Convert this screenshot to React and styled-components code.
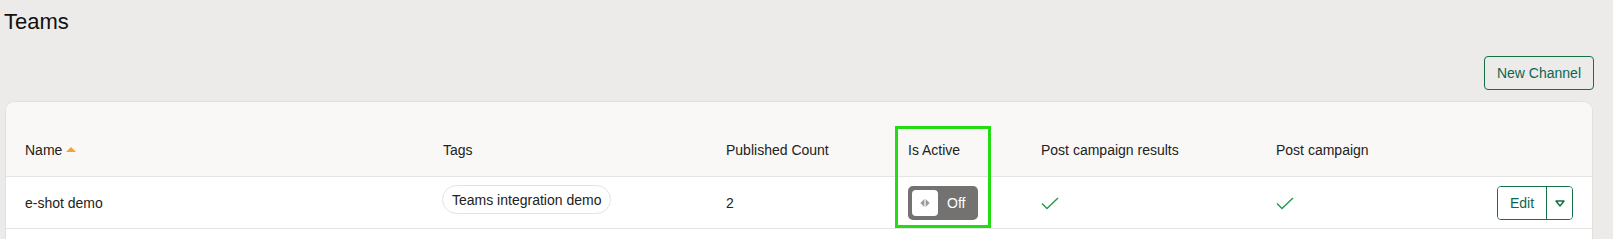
import React from 'react'
import styled, { createGlobalStyle } from 'styled-components'

const GlobalStyle = createGlobalStyle`
  html, body {
    margin: 0;
    padding: 0;
    background: #ecebe9;
    font-family: "Liberation Sans", Arial, sans-serif;
    color: #222;
  }
  * { box-sizing: border-box; }
`

const Page = styled.div`
  padding: 10px 19px 0 5px;
`

const Title = styled.h1`
  margin: 0 0 0 -1px;
  font-size: 22px;
  line-height: 24px;
  font-weight: 400;
  color: #111;
`

const Toolbar = styled.div`
  display: flex;
  justify-content: flex-end;
  margin-top: 22px;
  margin-bottom: 11px;
`

const OutlineButton = styled.button`
  height: 34px;
  padding: 0 12px;
  border: 1px solid #137145;
  border-radius: 4px;
  background: transparent;
  color: #0d6650;
  font: 14px "Liberation Sans", Arial, sans-serif;
  cursor: pointer;
`

const Card = styled.div`
  position: relative;
  background: #fff;
  border: 1px solid #e2e0dd;
  border-radius: 10px;
  overflow: hidden;
  margin-right: 1px;
  min-height: 160px;
`

const Row = styled.div`
  display: grid;
  grid-template-columns: 418px 283px 182px 133px 235px 1fr auto;
  align-items: ${p => (p.$head ? 'end' : 'center')};
  height: ${p => (p.$head ? '75px' : '52px')};
  padding: ${p => (p.$head ? '0 19px 18px' : '1px 19px 0')};
  background: ${p => (p.$head ? '#f9f8f6' : '#fff')};
  border-bottom: 1px solid #e6e5e3;
  font-size: 14px;
  line-height: 16px;
  color: #222;
`

const HeadCell = styled.div`
  display: flex;
  align-items: center;
  gap: 4px;
`

const Cell = styled.div`
  display: flex;
  align-items: center;
  justify-content: ${p => (p.$end ? 'flex-end' : 'flex-start')};
`

const SortUp = styled.span`
  width: 0;
  height: 0;
  border-left: 5px solid transparent;
  border-right: 5px solid transparent;
  border-bottom: 5px solid #f4a42a;
  margin-top: -2px;
`

const Tag = styled.span`
  display: inline-flex;
  align-items: center;
  height: 29px;
  padding: 0 9px;
  margin-left: -1px;
  margin-bottom: 7px;
  border: 1px solid #e3e3e3;
  border-radius: 15px;
  background: #fff;
  font-size: 14px;
`

const Toggle = styled.div`
  display: flex;
  align-items: center;
  width: 70px;
  height: 34px;
  padding: 4px;
  border-radius: 5px;
  background: #737270;
  color: #fff;
  font-size: 14px;
  gap: 9px;
`

const Knob = styled.span`
  display: flex;
  align-items: center;
  justify-content: center;
  width: 26px;
  height: 26px;
  border-radius: 4px;
  background: #fff;
`

const Split = styled.div`
  display: flex;
  height: 34px;
  border: 1px solid #137145;
  border-radius: 4px;
  overflow: hidden;
`

const SplitMain = styled.button`
  width: 49px;
  border: 0;
  border-right: 1px solid #137145;
  background: #fff;
  color: #0d6650;
  font: 14px "Liberation Sans", Arial, sans-serif;
  padding: 0;
`

const SplitCaret = styled.button`
  width: 25px;
  border: 0;
  background: #fff;
  display: flex;
  align-items: center;
  justify-content: center;
  padding: 0;
`

const Highlight = styled.div`
  position: absolute;
  left: 889px;
  top: 24px;
  width: 96px;
  height: 102px;
  border: 3px solid #22dd11;
  pointer-events: none;
`

const Check = () => (
  <svg width="18" height="13" viewBox="0 0 18 13" fill="none">
    <path d="M1 6.5 L6 11.5 L17 1" stroke="#2b9a4c" strokeWidth="1.5" />
  </svg>
)

export default function App() {
  return (
    <>
      <GlobalStyle />
      <Page>
        <Title>Teams</Title>
        <Toolbar>
          <OutlineButton>New Channel</OutlineButton>
        </Toolbar>
        <Card>
          <Row $head>
            <HeadCell>Name <SortUp /></HeadCell>
            <HeadCell>Tags</HeadCell>
            <HeadCell>Published Count</HeadCell>
            <HeadCell>Is Active</HeadCell>
            <HeadCell>Post campaign results</HeadCell>
            <HeadCell>Post campaign</HeadCell>
            <HeadCell />
          </Row>
          <Row>
            <Cell>e-shot demo</Cell>
            <Cell><Tag>Teams integration demo</Tag></Cell>
            <Cell>2</Cell>
            <Cell>
              <Toggle>
                <Knob>
                  <svg width="10" height="8" viewBox="0 0 10 8">
                    <path d="M4.4 0 L0.4 4 L4.4 8 Z" fill="#9a9a9a" />
                    <path d="M5.6 0 L9.6 4 L5.6 8 Z" fill="#9a9a9a" />
                  </svg>
                </Knob>
                Off
              </Toggle>
            </Cell>
            <Cell><Check /></Cell>
            <Cell><Check /></Cell>
            <Cell $end>
              <Split>
                <SplitMain>Edit</SplitMain>
                <SplitCaret>
                  <svg width="10" height="7" viewBox="0 0 10 7">
                    <path d="M1 1 L9 1 L5 6 Z" fill="none" stroke="#137145" strokeWidth="1.5" strokeLinejoin="round" />
                  </svg>
                </SplitCaret>
              </Split>
            </Cell>
          </Row>
          <Highlight />
        </Card>
      </Page>
    </>
  )
}
